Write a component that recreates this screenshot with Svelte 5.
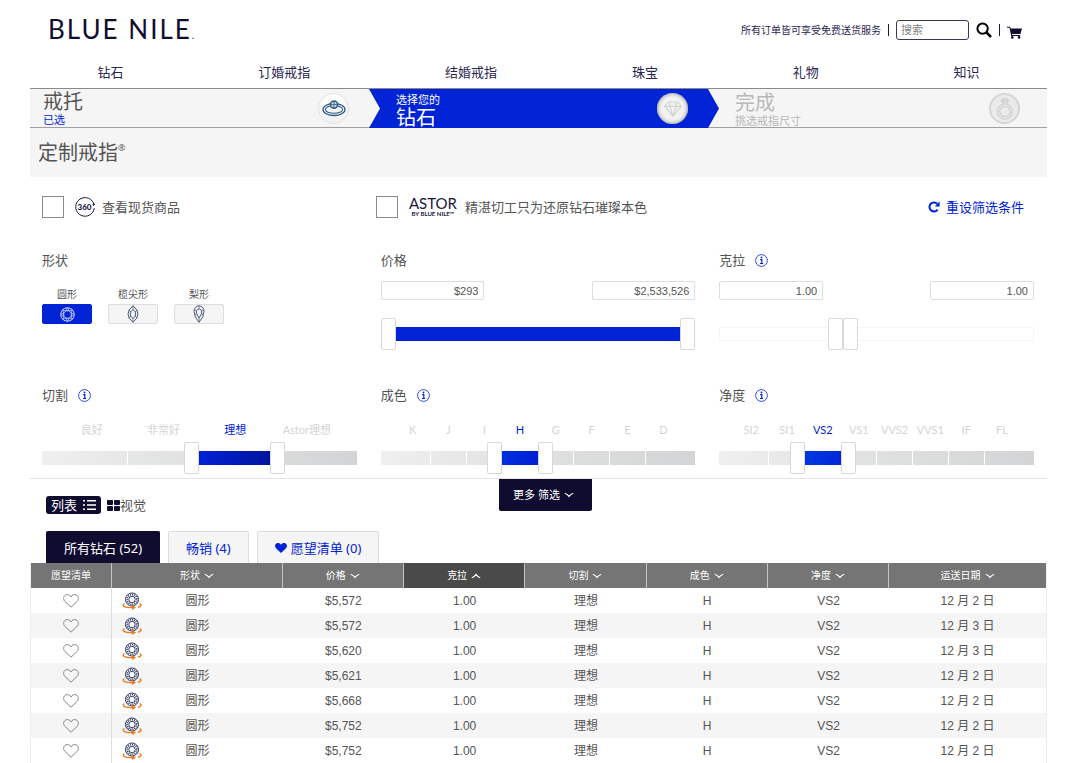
<script lang="ts">
	type Grade = {
		id: string;
		title: string;
		labels: string[];
		low: number;
		high: number;
		fill: string;
	};

	const navLinks = ['钻石', '订婚戒指', '结婚戒指', '珠宝', '礼物', '知识'];

	const shapes = [
		{ id: 'round', label: '圆形' },
		{ id: 'marquise', label: '榄尖形' },
		{ id: 'pear', label: '梨形' }
	];

	const columns = [
		{ id: 'shape', label: '形状' },
		{ id: 'price', label: '价格' },
		{ id: 'carat', label: '克拉' },
		{ id: 'cut', label: '切割' },
		{ id: 'color', label: '成色' },
		{ id: 'clarity', label: '净度' },
		{ id: 'date', label: '运送日期' }
	];

	const diamonds = [
		{ price: '$5,572', date: '12 月 2 日' },
		{ price: '$5,572', date: '12 月 3 日' },
		{ price: '$5,620', date: '12 月 3 日' },
		{ price: '$5,621', date: '12 月 2 日' },
		{ price: '$5,668', date: '12 月 2 日' },
		{ price: '$5,752', date: '12 月 2 日' },
		{ price: '$5,752', date: '12 月 2 日' }
	];

	let shape = $state('round');
	let sortBy = $state('carat');
	let tab = $state('all');
	let price = $state({ min: '$293', max: '$2,533,526', low: 0, high: 1000 });
	let carat = $state({ min: '1.00', max: '1.00', low: 382, high: 382 });

	let grades: Grade[] = $state([
		{
			id: 'cut',
			title: '切割',
			labels: ['良好', '非常好', '理想', 'Astor理想'],
			low: 2,
			high: 3,
			fill: 'linear-gradient(to right, #0022d8, #00149c)'
		},
		{
			id: 'color',
			title: '成色',
			labels: ['K', 'J', 'I', 'H', 'G', 'F', 'E', 'D'],
			low: 3,
			high: 4,
			fill: 'linear-gradient(to right, #0030de, #001fd6)'
		},
		{
			id: 'clarity',
			title: '净度',
			labels: ['SI2', 'SI1', 'VS2', 'VS1', 'VVS2', 'VVS1', 'IF', 'FL'],
			low: 2,
			high: 3,
			fill: 'linear-gradient(to right, #0038e0, #0028da)'
		}
	]);
</script>

{#snippet info(name: string)}
	<button class="info" aria-label="{name}说明">
		<svg width="13" height="13" viewBox="0 0 13 13" fill="none" stroke="#0023d6">
			<circle cx="6.5" cy="6.5" r="5.9" stroke-width="0.8" />
			<path d="M5.2 5.6h1.6v4M5 9.5h3.2" stroke-width="1.2" />
			<circle cx="6.5" cy="3.5" r="0.9" fill="#0023d6" stroke="none" />
		</svg>
	</button>
{/snippet}

{#snippet chevron(up: boolean)}
	<svg width="10" height="6" viewBox="0 0 10 6" fill="none" stroke="currentColor">
		<path d={up ? 'M.8 4.8Q3.6 3.800 5 1.4Q6.400 3.800 9.200 4.800' : 'M.8 1.200Q3.600 2.200 5 4.400Q6.400 2.200 9.200 1.200'} stroke-width="1.1" />
	</svg>
{/snippet}

{#snippet roundGem(size: number)}
	<svg width={size} height={size} viewBox="0 0 16 16" fill="none" stroke="currentColor" stroke-width="1">
		<circle cx="8" cy="8" r="7.2" />
		<path d="M6.3 4h3.4l2.3 2.3v3.4L9.7 12H6.3L4 9.7V6.3z" />
		<path
			d="M6.3 4L8 .8 9.7 4l3.4-1.1-1.1 3.4L15.2 8 12 9.7l1.1 3.4L9.7 12 8 15.2 6.3 12l-3.4 1.1L4 9.7.8 8 4 6.3 2.9 2.9z"
			stroke-width="0.7"
		/>
	</svg>
{/snippet}

<div class="page">
	<header>
		<a class="logo" href="#home">BLUE NILE<span>.</span></a>
		<div class="tools">
			<span class="shipping">所有订单皆可享受免费送货服务</span>
			<span class="bar"></span>
			<input class="search" type="text" placeholder="搜索" aria-label="搜索" />
			<button class="icon-btn" aria-label="查找">
				<svg width="16" height="16" viewBox="0 0 16 16" fill="none" stroke="#000">
					<circle cx="6.6" cy="6.6" r="5.2" stroke-width="2" />
					<path d="M10.4 10.4L15 15" stroke-width="2.6" />
				</svg>
			</button>
			<span class="bar"></span>
			<a class="cart" href="#cart" aria-label="购物车">
				<svg width="16" height="13" viewBox="0 0 16 13" fill="#100c30">
					<path d="M0 .8h3l.7 1.6H15L13.4 8H5l.2 1h8v1H4.2L2.5 1.8H0z" />
					<circle cx="5.3" cy="11.4" r="1.3" />
					<circle cx="12" cy="11.4" r="1.3" />
				</svg>
			</a>
		</div>
	</header>

	<nav>
		{#each navLinks as link}
			<a href="#{link}">{link}</a>
		{/each}
	</nav>

	<div class="steps">
		<div class="step done">
			<div>
				<div class="step-title">戒托</div>
				<a class="step-note" href="#setting">已选</a>
			</div>
			<span class="badge">
				<svg width="24" height="17" viewBox="0 0 24 17" fill="none" stroke="#2c5a85">
					<ellipse cx="12" cy="9.5" rx="11" ry="6" stroke-width="1.3" />
					<ellipse cx="12" cy="9.5" rx="8.6" ry="3.8" stroke-width="1.1" />
					<circle cx="12" cy="4.6" r="3.6" fill="#c5d8ea" stroke-width="1.4" />
					<path d="M12 1v7.2M8.4 4.6h7.2" stroke-width="0.8" />
				</svg>
			</span>
		</div>
		<div class="step current">
			<div>
				<div class="step-note">选择您的</div>
				<div class="step-title">钻石</div>
			</div>
			<span class="badge pressed">
				<svg width="18" height="16" viewBox="0 0 18 16" fill="none" stroke="#d4d4d4" stroke-width="1.2">
					<path d="M4 1h10l3.3 4.3L9 15 .7 5.3zM.7 5.3h16.6M5.8 5.3L9 15l3.2-9.7M5.8 5.3V1M12.2 5.3V1" />
				</svg>
			</span>
		</div>
		<div class="step next">
			<div>
				<div class="step-title">完成</div>
				<div class="step-note">挑选戒指尺寸</div>
			</div>
			<span class="badge ring">
				<svg width="18" height="22" viewBox="0 0 18 22" fill="none" stroke="#d0d0d0">
					<circle cx="9" cy="13.5" r="7.6" stroke-width="1.3" />
					<circle cx="9" cy="13.5" r="5.2" stroke-width="1.3" />
					<path d="M6.8.8h4.4l1.6 2L9 6 5.2 2.8zM5.2 2.8h7.6" stroke-width="1.2" />
				</svg>
			</span>
		</div>
	</div>

	<h1>定制戒指<sup>®</sup></h1>

	<div class="options">
		<label>
			<input type="checkbox" />
			<svg class="spin" width="20" height="20" viewBox="0 0 20 20">
				<path
					d="M18.300 5.600A9.300 9.300 0 1 0 19.300 11M18.300 5.600l.9 2.200"
					fill="none"
					stroke="#1a1640"
					stroke-width="1"
				/>
				<circle cx="18.600" cy="7.600" r="1.100" fill="#1a1640" />
				<text x="9.500" y="13" text-anchor="middle" font-size="8" font-weight="900" fill="#1a1640">360</text>
			</svg>
			<span>查看现货商品</span>
		</label>
		<label>
			<input type="checkbox" />
			<span class="astor">ASTOR<small>BY BLUE NILE™</small></span>
			<span>精湛切工只为还原钻石璀璨本色</span>
		</label>
		<button class="reset">
			<svg width="12" height="12" viewBox="0 0 12 12">
				<path d="M9.6 8.6A4.5 4.5 0 1 1 9.3 2.9" fill="none" stroke="#0023d6" stroke-width="2" />
				<path d="M11.6.4v5H6.8z" fill="#0023d6" />
			</svg>
			重设筛选条件
		</button>
	</div>

	<div class="filters">
		<section>
			<h2>形状</h2>
			<div class="shapes">
				{#each shapes as item}
					<div class="shape">
						<span id="shape-{item.id}">{item.label}</span>
						<button
							class:active={shape === item.id}
							aria-labelledby="shape-{item.id}"
							onclick={() => (shape = item.id)}
						>
							{#if item.id === 'round'}
								{@render roundGem(15)}
							{:else if item.id === 'marquise'}
								<svg width="12" height="18" viewBox="0 0 12 18" fill="none" stroke="currentColor">
									<path d="M6 .7Q16 9 6 17.3Q-4 9 6 .7z" />
									<path d="M6 4.3Q11.4 9 6 13.7Q.6 9 6 4.3z" />
									<path d="M6 .7v3.6M6 13.7v3.6M1.6 5l2.5 2M10.4 5L7.9 7M1.6 13l2.5-2M10.4 13l-2.5-2" stroke-width="0.7" />
								</svg>
							{:else}
								<svg width="12" height="18" viewBox="0 0 12 18" fill="none" stroke="currentColor">
									<path d="M6 17.3Q1 12 1 6.2A5 5.4 0 0 1 11 6.2Q11 12 6 17.3z" />
									<path d="M6 13L3.4 8.6V5.4L6 3.6l2.6 1.8v3.2z" />
									<path d="M6 .8v2.8M1.2 5l2.2.4M10.8 5l-2.2.4M1.8 10l1.6-1.4M10.2 10L8.6 8.6M6 13v4" stroke-width="0.7" />
								</svg>
							{/if}
						</button>
					</div>
				{/each}
			</div>
		</section>

		<section>
			<h2>价格</h2>
			<div class="bounds">
				<input type="text" aria-label="最低价格" bind:value={price.min} />
				<input type="text" aria-label="最高价格" bind:value={price.max} />
			</div>
			<div class="slider">
				<div class="plain"></div>
				<div class="track">
					<div class="fill" style="left: {price.low / 10}%; right: {100 - price.high / 10}%"></div>
				</div>
				<input class="low" type="range" max="1000" aria-label="最低价格" bind:value={price.low} />
				<input class="high" type="range" max="1000" aria-label="最高价格" bind:value={price.high} />
			</div>
		</section>

		<section>
			<h2>克拉 {@render info('克拉')}</h2>
			<div class="bounds">
				<input type="text" aria-label="最小克拉" bind:value={carat.min} />
				<input type="text" aria-label="最大克拉" bind:value={carat.max} />
			</div>
			<div class="slider">
				<div class="plain"></div>
				<input class="low" type="range" max="1000" aria-label="最小克拉" bind:value={carat.low} />
				<input class="high" type="range" max="1000" aria-label="最大克拉" bind:value={carat.high} />
			</div>
		</section>

		{#each grades as grade}
			<section>
				<h2>{grade.title} {@render info(grade.title)}</h2>
				<div class="labels">
					{#each grade.labels as label, i}
						<span class:on={i >= grade.low && i < grade.high}>{label}</span>
					{/each}
				</div>
				<div class="slider">
					<div class="segments">
						{#each grade.labels as _}
							<i></i>
						{/each}
					</div>
					<div class="track">
						<div
							class="fill"
							style="left: {(grade.low / grade.labels.length) * 100}%; right: {100 -
								(grade.high / grade.labels.length) * 100}%; background: {grade.fill}"
						></div>
					</div>
					<input
						class="low"
						type="range"
						max={grade.labels.length}
						aria-label="最低{grade.title}"
						bind:value={grade.low}
					/>
					<input
						class="high"
						type="range"
						max={grade.labels.length}
						aria-label="最高{grade.title}"
						bind:value={grade.high}
					/>
				</div>
			</section>
		{/each}
	</div>

	<div class="toolbar">
		<div class="views">
			<button class="view active">
				列表
				<svg width="13" height="10" viewBox="0 0 13 10" fill="#fff">
					<path d="M0 0h2v1.6H0zM4 0h9v1.6H4zM0 4.2h2v1.6H0zM4 4.2h9v1.6H4zM0 8.4h2V10H0zM4 8.4h9V10H4z" />
				</svg>
			</button>
			<button class="view">
				<svg width="13" height="11" viewBox="0 0 13 11" fill="#100c30">
					<rect width="6" height="5" rx="1" />
					<rect x="7" width="6" height="5" rx="1" />
					<rect y="6" width="6" height="5" rx="1" />
					<rect x="7" y="6" width="6" height="5" rx="1" />
				</svg>视觉
			</button>
		</div>
		<button class="more">更多 筛选 {@render chevron(false)}</button>
	</div>

	<div class="tabs">
		<button class:active={tab === 'all'} onclick={() => (tab = 'all')}>所有钻石 (52)</button>
		<button class:active={tab === 'best'} onclick={() => (tab = 'best')}>畅销 (4)</button>
		<button class:active={tab === 'wish'} onclick={() => (tab = 'wish')}>
			<svg width="12" height="10" viewBox="0 0 12 10" fill="#0023d6">
				<path d="M6 10L1 5.2C-.6 3.4-.1 1.2 1.4.4 3-.4 5 0 6 1.8 7 0 9-.4 10.6.4c1.5.8 2 3 .4 4.8z" />
			</svg>
			愿望清单 (0)
		</button>
	</div>

	<table>
		<colgroup>
			<col class="c-wish" />
			<col class="c-shape" />
			<col span="5" />
			<col class="c-date" />
		</colgroup>
		<thead>
			<tr>
				<th>愿望清单</th>
				{#each columns as column}
					<th class:sorted={sortBy === column.id}>
						<button onclick={() => (sortBy = column.id)}>
							{column.label}
							{@render chevron(sortBy === column.id)}
						</button>
					</th>
				{/each}
			</tr>
		</thead>
		<tbody>
			{#each diamonds as diamond}
				<tr>
					<td>
						<button class="wish" aria-label="加入愿望清单">
							<svg width="16" height="14" viewBox="0 0 16 14" fill="none" stroke="#858585">
								<path d="M8 13.2L1.8 7.3C-.2 5 .6 2 2.6 1 4.700 0 7 .8 8 3c1-2.200 3.300-3 5.400-2 2 1 2.800 4 .8 6.300z" />
							</svg>
						</button>
					</td>
					<td>
						<div class="shape-cell">
							<span class="view360">
								<svg width="20" height="18" viewBox="0 0 20 18" fill="none">
									<circle cx="10" cy="7.500" r="6.500" stroke="#26315c" stroke-width="1" />
									<circle cx="10" cy="7.500" r="4.800" stroke="#26315c" stroke-width="1.600" stroke-dasharray="1 1" />
									<circle cx="10" cy="7.500" r="3.200" fill="#fff" stroke="#26315c" stroke-width="0.900" />
									<path d="M2.400 11.600C-1 13.800 3 16 11 15.600M17.600 11.600c2.400 1.200 1.800 2.800-1.600 3.600" stroke="#f07818" stroke-width="1.400" />
									<path d="M10 12.800l4 2.600-4 2.600z" fill="#f07818" />
								</svg>
							</span>
							圆形
						</div>
					</td>
					<td>{diamond.price}</td>
					<td>1.00</td>
					<td>理想</td>
					<td>H</td>
					<td>VS2</td>
					<td>{diamond.date}</td>
				</tr>
			{/each}
		</tbody>
	</table>
</div>

<style>
	:global(body) {
		margin: 0;
		background: #fff;
	}

	.page {
		padding: 0 33px 0 30px;
		font-family: 'Noto Sans', 'Noto Sans CJK SC', sans-serif;
		font-size: 13px;
		line-height: 20px;
		color: #555;
	}

	.page * {
		box-sizing: border-box;
	}

	svg {
		display: block;
		flex: none;
	}

	a {
		color: inherit;
		text-decoration: none;
	}

	button,
	input {
		margin: 0;
		font: inherit;
		color: inherit;
	}

	button {
		padding: 0;
		border: none;
		background: none;
		cursor: pointer;
	}

	header {
		display: flex;
		align-items: center;
		justify-content: space-between;
		height: 60px;
		padding: 0 24px 0 18px;
		color: #2a2650;
	}

	.logo {
		padding-top: 4px;
		font-family: Lato, sans-serif;
		font-size: 26px;
		line-height: 32px;
		letter-spacing: 2px;
		color: #100c30;
	}

	.logo span {
		font-size: 10px;
	}

	.tools {
		display: flex;
		align-items: center;
		gap: 7px;
	}

	.shipping {
		font-size: 10px;
	}

	.bar {
		width: 1px;
		height: 12px;
		background: #1a1640;
	}

	.search {
		width: 73px;
		height: 20px;
		padding: 0 4px;
		border: 1px solid #3a3658;
		border-radius: 3px;
		font-size: 11px;
	}

	.search::placeholder {
		color: #858585;
	}

	.cart {
		padding-top: 4px;
	}

	nav {
		display: flex;
		justify-content: space-around;
		height: 28px;
		padding-top: 2px;
		color: #2a2650;
	}

	.steps {
		display: grid;
		grid-template-columns: repeat(3, 1fr);
		height: 40px;
		border-top: 1px solid #8a8a8a;
		border-bottom: 1px solid #a0a0a0;
		background: #f5f5f5;
	}

	.step {
		display: flex;
		align-items: center;
		justify-content: space-between;
		padding: 0 20px 0 27px;
	}

	.step-title {
		font-size: 20px;
		line-height: 21px;
	}

	.step-note {
		display: block;
		font-size: 11px;
		line-height: 15px;
	}

	.done {
		padding-left: 13px;
	}

	.done .step-note {
		color: #0023d6;
	}

	.current {
		z-index: 1;
		margin-right: -11px;
		padding-right: 31px;
		background: #0023d6;
		color: #fff;
		clip-path: polygon(0 0, calc(100% - 11px) 0, 100% 50%, calc(100% - 11px) 100%, 0 100%, 11px 50%);
	}

	.current > div,
	.next > div {
		padding-top: 3px;
	}

	.next {
		padding-right: 27px;
		color: #b8b8b8;
	}

	.badge {
		display: flex;
		align-items: center;
		justify-content: center;
		width: 31px;
		height: 31px;
		border: 1px solid #e2e2e2;
		border-radius: 50%;
		background: linear-gradient(#fff, #f0f0f0);
	}

	.pressed {
		border: none;
		background: #f3f3f3;
		box-shadow: inset 0 0 4px #777;
	}

	.ring {
		border: 2px solid #d6d6d6;
		background: #ebebeb;
	}

	h1 {
		display: flex;
		margin: 0;
		padding: 12px 8px;
		background: #f5f5f5;
		font-size: 20px;
		font-weight: 400;
		line-height: 25px;
	}

	sup {
		font-size: 9px;
		line-height: 15px;
	}

	.options {
		display: grid;
		grid-template-columns: 34% 1fr auto;
		align-items: center;
		padding: 19px 23px 0 12px;
	}

	.options label {
		display: flex;
		align-items: center;
	}

	.options input {
		width: 22px;
		height: 22px;
		appearance: none;
		border: 1px solid #8a8a8a;
		background: #fff;
	}

	.options input:checked {
		background: #0023d6;
	}

	.spin {
		margin: 0 7px 0 11px;
		font-family: Lato, sans-serif;
	}

	.astor {
		margin: 0 8px 0 11px;
		font-family: Lato, sans-serif;
		font-size: 15px;
		line-height: 14px;
		text-align: center;
		color: #1a1640;
	}

	.astor small {
		display: block;
		font-size: 6px;
		font-weight: 700;
		line-height: 8px;
	}

	.reset {
		display: flex;
		align-items: center;
		gap: 6px;
		color: #0023d6;
	}

	.filters {
		display: grid;
		grid-template-columns: repeat(3, 1fr);
		column-gap: 24px;
		row-gap: 35px;
		margin-top: 32px;
		padding: 0 13px 4px 12px;
	}

	h2 {
		display: flex;
		align-items: center;
		gap: 10px;
		margin: 0;
		font-size: 13px;
		font-weight: 400;
		line-height: 20px;
	}

	.shapes {
		display: flex;
		gap: 16px;
		padding-top: 15px;
	}

	.shape {
		display: grid;
		justify-items: center;
		gap: 1px;
		font-size: 10px;
		line-height: 18px;
	}

	.shape button {
		display: flex;
		align-items: center;
		justify-content: center;
		width: 50px;
		height: 20px;
		border: 1px solid #ddd;
		border-radius: 2px;
		background: #f5f5f5;
		color: #4a5878;
	}

	.shape button.active {
		border-color: #0023d6;
		background: #0023d6;
		color: #dfe4ff;
	}

	.bounds {
		display: flex;
		justify-content: space-between;
		padding: 11px 0 18px;
	}

	.bounds input {
		width: 33%;
		height: 19px;
		padding: 0 5px;
		border: 1px solid #ddd;
		border-radius: 2px;
		font-family: 'Liberation Sans', Arial, sans-serif;
		font-size: 11px;
		text-align: right;
	}

	.slider {
		position: relative;
		display: grid;
		align-items: center;
		height: 32px;
	}

	.track,
	.plain,
	.segments {
		grid-area: 1 / 1;
		height: 14px;
	}

	.track {
		position: relative;
		margin: 0 15px;
	}

	.plain {
		border: 1px solid #f6f6f6;
	}

	.fill {
		position: absolute;
		top: 0;
		bottom: 0;
		background: #0023d6;
	}

	.segments {
		display: flex;
		background: linear-gradient(to right, #efefef, #e2e3e3 40%, #d3d4d5);
	}

	.segments i {
		flex: 1 1 0;
		box-sizing: content-box;
		border-right: 1px solid #fff;
	}

	.segments i:first-child {
		padding-left: 14px;
	}

	.segments i:last-child {
		padding-right: 14px;
		border-right: none;
	}

	/* two ranges share a track, only the thumbs take the pointer */
	.slider input {
		position: absolute;
		top: 0;
		width: calc(100% - 15px);
		height: 32px;
		appearance: none;
		background: none;
		pointer-events: none;
	}

	.slider .low {
		left: 0;
	}

	.slider .high {
		right: 0;
	}

	.slider input::-webkit-slider-thumb {
		box-sizing: border-box;
		width: 15px;
		height: 32px;
		appearance: none;
		border: 1px solid #d8d8d8;
		border-radius: 2px;
		background: #fff;
		cursor: pointer;
		pointer-events: auto;
	}

	.labels {
		display: flex;
		padding: 17px 14px 4px;
		font-family: Lato, 'Noto Sans CJK SC', sans-serif;
		font-size: 11px;
		line-height: 16px;
		color: #d3d4d5;
	}

	.labels span {
		flex: 1 1 0;
		min-width: 0;
		text-align: center;
		white-space: nowrap;
	}

	.labels .on {
		color: #0023d6;
	}

	.toolbar {
		display: grid;
		grid-template-columns: 1fr auto 1fr;
		padding-left: 14px;
		border-top: 1px solid #e4e4e4;
	}

	.views {
		display: flex;
		align-items: center;
		gap: 6px;
		padding: 17px 0 0 2px;
	}

	.view {
		display: flex;
		align-items: center;
		height: 18px;
		line-height: 18px;
	}

	.view.active {
		gap: 6px;
		padding: 0 5px;
		border-radius: 3px;
		background: #100c30;
		color: #fff;
	}

	.more {
		display: flex;
		align-items: center;
		gap: 4px;
		align-self: start;
		height: 32px;
		padding: 0 18px 0 14px;
		border-radius: 0 0 2px 2px;
		background: #100c30;
		font-size: 11px;
		color: #fff;
	}

	.tabs {
		display: flex;
		gap: 8px;
		padding: 17px 16px 0;
	}

	.tabs button {
		display: flex;
		align-items: center;
		gap: 4px;
		height: 32px;
		padding: 0 17px;
		border: 1px solid #ddd;
		border-bottom: none;
		border-radius: 2px 2px 0 0;
		background: #f5f5f5;
		color: #0023d6;
	}

	.tabs button.active {
		border-color: #100c30;
		background: #100c30;
		color: #fff;
	}

	table {
		width: 100%;
		border-collapse: separate;
		border-spacing: 0;
		border-left: 1px solid #eee;
		border-right: 1px solid #eee;
		table-layout: fixed;
		text-align: center;
		font-family: 'Liberation Sans', 'Noto Sans CJK SC', sans-serif;
		font-size: 12px;
	}

	col {
		width: 11.95%;
	}

	.c-wish {
		width: 8%;
	}

	.c-shape {
		width: 16.8%;
	}

	.c-date {
		width: 15.45%;
	}

	th {
		height: 25px;
		padding: 0;
		border-right: 1px solid #c4c4c4;
		background: #757575;
		font-size: 10px;
		font-weight: 400;
		line-height: 16px;
		color: #fff;
	}

	th:last-child {
		border-right: none;
	}

	th.sorted {
		background: #4a4a4a;
	}

	th button {
		display: flex;
		align-items: center;
		justify-content: center;
		gap: 4px;
		width: 100%;
	}

	td {
		height: 25px;
		padding: 0;
		line-height: 18px;
	}

	td:first-child {
		border-right: 1px solid #ddd;
	}

	tr:nth-child(even) td {
		background: #f5f5f5;
	}

	.wish {
		display: block;
		margin: 0 auto;
	}

	.shape-cell {
		display: grid;
		grid-template-columns: 1fr auto 1fr;
		align-items: center;
		padding: 0 10px;
	}
</style>
